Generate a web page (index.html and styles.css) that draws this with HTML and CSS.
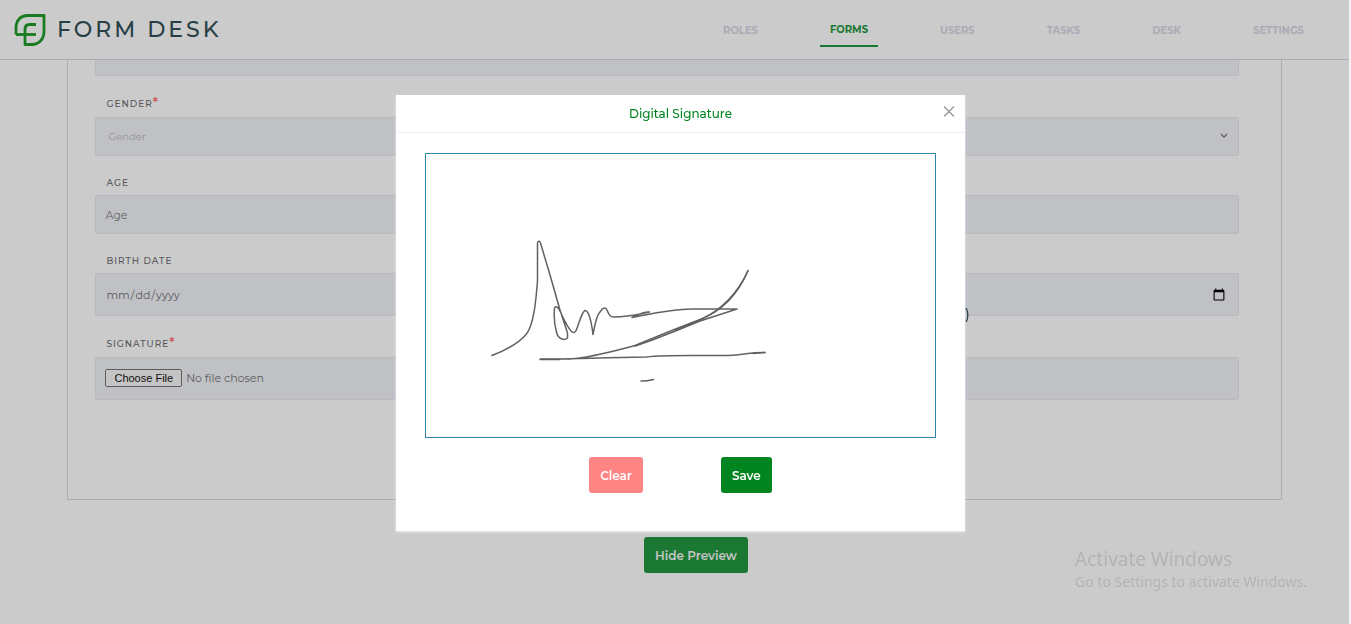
FILE: index.html
```html
<!DOCTYPE html>
<html lang="en">
<head>
<meta charset="utf-8">
<title>Form Desk</title>
<link rel="stylesheet" href="styles.css">
</head>
<body>
<div class="app">
  <header class="topbar">
    <a class="brand" href="#">
      <svg class="brand-mark" viewBox="0 0 32 32" fill="none" stroke="currentColor" stroke-width="2.8" stroke-linejoin="round" aria-hidden="true">
        <path d="M2 20.500V14C2 6 7 1.500 13.500 1.500H30V17.500C30 25 25 30.500 18 30.500H11V15.500C11 12.500 12.500 10.500 15.500 10.500H22"/>
        <path d="M2 20.500H22"/>
      </svg>
      <span>FORM DESK</span>
    </a>
    <nav class="nav">
      <a href="#">ROLES</a>
      <a class="active" href="#">FORMS</a>
      <a href="#">USERS</a>
      <a href="#">TASKS</a>
      <a href="#">DESK</a>
      <a href="#">SETTINGS</a>
    </nav>
  </header>
  <main class="content">
    <form class="panel">
      <input class="control control-cut" type="text" aria-label="Name">
      <label class="label required" for="gender">GENDER<span class="star">*</span></label>
      <div class="select-wrap">
        <select class="control select" id="gender"><option>Gender</option></select>
        <svg class="chevron" viewBox="0 0 8 6" fill="none" stroke="currentColor" stroke-width="1.300" aria-hidden="true"><path d="M1 1l3 3 3-3"/></svg>
      </div>
      <label class="label" for="age">AGE</label>
      <input class="control" id="age" type="text" placeholder="Age">
      <label class="label" for="birth">BIRTH DATE</label>
      <input class="control tall date" id="birth" type="date">
      <label class="label required" for="signature">SIGNATURE<span class="star">*</span></label>
      <input class="control tall file" id="signature" type="file">
    </form>
    <div class="actions"><button class="button save" type="button">Hide Preview</button></div>
  </main>
</div>
<div class="backdrop">
  <section class="dialog" role="dialog" aria-labelledby="dialog-title">
    <header class="dialog-head">
      <h2 id="dialog-title">Digital Signature</h2>
      <button class="close" type="button" aria-label="Close">
        <svg viewBox="0 0 12 12" fill="none" stroke="currentColor" stroke-width="1.500" aria-hidden="true"><path d="M1 1l10 10M11 1L1 11"/></svg>
      </button>
    </header>
    <div class="dialog-body">
      <svg class="pad" viewBox="426 154 509 283" fill="none" stroke="#5f6163" stroke-width="1.500" stroke-linecap="round" stroke-linejoin="round" role="img" aria-label="Signature">
        <path d="M492 355.500C506 350 520 342 526.500 334C534 324 536 300 537.500 281V243C537.500 240.500 540 240.500 540.500 243L550 275L560 310L567.500 333V338C564 341 558 339 556.500 332C554 324 554 314 554.500 308C556 305 559 308 560.500 312C564 320 567 326 571 331C574 334 576 332 577.500 327C580 320 582 312 585 310.500C588 310 591 318 593 334.500C595 325 596 316 600 312C603 307 606 307 607 310C609 315 610 317 614 317C628 317 635 315 649.500 312C643 311 638 315 632 317.500C655 313 672 309 692 309H737L700 321L673 332C660 337 648 342 635 346"/>
        <path d="M748 270.500C737 297 720 312 699 320L673 330L635 345.500C614 351 594 357 570 359H540.500C570 360 596 357.500 646 357C670 354.500 700 356 728 355.500C745 355 750 352 765 352.500"/>
        <path d="M748 271C739 290 726 307 702 319L675 330"/>
        <path d="M753 353.500L765 352.500M540 359.500H560M641 381C647 381.500 649 380.500 653.500 379.500"/>
      </svg>
      <div class="dialog-actions">
        <button class="button clear" type="button">Clear</button>
        <button class="button save" type="button">Save</button>
      </div>
    </div>
    <span class="paren">)</span>
  </section>
</div>
<aside class="watermark"><p class="watermark-title">Activate Windows</p><p>Go to Settings to activate Windows.</p></aside>
</body>
</html>
```
FILE: styles.css
```css
* { box-sizing: border-box; }
html { background: #f2f2f2; }
body {
  margin: 0;
  font-family: Montserrat, Inter, "Liberation Sans", sans-serif;
  overflow: hidden;
}
.app {
  height: 100vh;
  margin-right: 2px;
  overflow: hidden;
  background: #fefefe;
}
.topbar {
  display: flex;
  align-items: center;
  justify-content: space-between;
  height: 60px;
  padding: 0 45px 0 14px;
  border-bottom: 1px solid #d5d7e2;
}
.brand {
  display: flex;
  align-items: center;
  gap: 11px;
  color: #344f58;
  font-size: 22px;
  font-weight: 500;
  letter-spacing: 3px;
  text-decoration: none;
}
.brand-mark { width: 32px; height: 32px; color: #209c28; }
.nav { display: flex; align-items: center; gap: 72px; padding-top: 2px; }
.nav a {
  color: #d5d8e4;
  font-size: 10px;
  font-weight: 700;
  line-height: 16px;
  text-decoration: none;
}
.nav .active {
  margin: 0 -10px;
  padding: 8px 10px 7px;
  border-bottom: 2px solid #229640;
  color: #229640;
}
.panel {
  margin: 0 5%;
  padding: 0 42px 99px 27px;
  border: 1px solid #d9d9d9;
  border-top: 0;
}
.control {
  display: block;
  width: 100%;
  height: 39px;
  padding: 0 9px;
  border: 1px solid #e6e7ee;
  border-radius: 2px;
  background: #f1f2f7;
  color: #6f7175;
  font-family: inherit;
  font-size: 11px;
}
.control::placeholder { color: #7c7e82; }
.control-cut { height: 16px; border-top: 0; border-radius: 0 0 2px 2px; }
.tall { height: 43px; }
.label {
  display: block;
  padding: 20px 0 5px 11px;
  color: #6b6d71;
  font-size: 9px;
  font-weight: 500;
  line-height: 14px;
  letter-spacing: 1px;
}
.required { padding: 21px 0 6px 11px; }
.star { color: #ff7b76; font-size: 12px; font-weight: 700; line-height: 12px; }
.select-wrap { position: relative; }
.select { appearance: none; padding: 0 12px; color: #b5b6b9; font-size: 10px; }
.chevron { position: absolute; top: 16px; right: 11px; width: 8px; height: 6px; color: #85706b; }
.date { padding: 0 12px 0 9px; }
.date::-webkit-calendar-picker-indicator { width: 14px; height: 14px; padding: 0; }
.file { padding: 11px 9px; }
.file::file-selector-button {
  height: 18px;
  margin-right: 4px;
  padding: 0 8px;
  border: 1px solid #767676;
  border-radius: 2px;
  background: #f6f6f6;
  color: #111;
  font-family: "Liberation Sans", Arial, sans-serif;
  font-size: 11px;
}
.actions { display: flex; justify-content: center; padding: 37px 0 0 43px; }
.button {
  height: 36px;
  padding: 0 11px;
  border: 0;
  border-radius: 3px;
  color: #fff;
  font-family: inherit;
  font-size: 12px;
  font-weight: 600;
}
.save { background: #008520; }
.clear { background: #ff8585; }
.actions .save { background: #229640; color: #f4f6f4; }
.backdrop {
  position: fixed;
  inset: 0 2px 0 0;
  display: flex;
  align-items: flex-start;
  justify-content: center;
  padding: 95px 0 0 12px;
  background: rgba(0, 0, 0, 0.2);
}
.dialog {
  position: relative;
  width: 569px;
  background: #fff;
  box-shadow: 0 1px 2px #eeeef5;
}
.dialog-head {
  position: relative;
  padding: 10px;
  border-bottom: 1px solid #efeff6;
}
.dialog-head h2 {
  margin: 0;
  color: #008520;
  font-size: 12px;
  font-weight: 500;
  line-height: 17px;
  text-align: center;
}
.close {
  position: absolute;
  top: 10px;
  right: 10px;
  display: flex;
  padding: 0;
  border: 0;
  background: none;
  color: #9b9b9b;
}
.close svg { width: 12px; height: 13px; }
.dialog-body { padding: 20px 29px 38px; }
.pad { display: block; width: 100%; border: 1px solid #2f86ac; }
.dialog-actions { display: flex; justify-content: center; gap: 78px; padding-top: 19px; }
.paren {
  position: absolute;
  bottom: 208px;
  left: 100%;
  color: #2d4048;
  font-size: 14px;
  font-weight: 500;
  line-height: 18px;
}
.watermark {
  position: fixed;
  right: 44px;
  bottom: 32px;
  color: #b3b3b3;
  font-family: "Noto Sans", "Open Sans", sans-serif;
  font-size: 14px;
  line-height: 20px;
}
.watermark p { margin: 0; }
.watermark .watermark-title { font-size: 19px; line-height: 26px; }
```
